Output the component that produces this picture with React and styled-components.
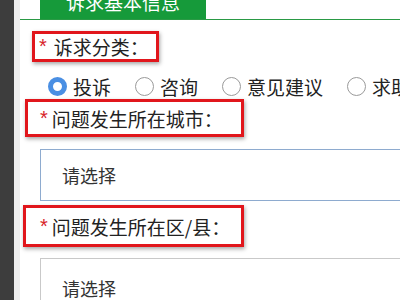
import { createGlobalStyle, styled } from "styled-components";

const GlobalStyle = createGlobalStyle`
  html, body {
    margin: 0;
    padding: 0;
    background: #ffffff;
  }
  body {
    width: 400px;
    height: 300px;
    overflow: hidden;
    font-family: "Noto Sans CJK SC", "Noto Sans", sans-serif;
  }
`;

const Page = styled.div`
  display: flex;
  width: 400px;
  height: 300px;
  overflow: hidden;
`;

const Sidebar = styled.div`
  width: 14px;
  flex-shrink: 0;
  background: #3d3d3d;
`;

const Gutter = styled.div`
  width: 6px;
  flex-shrink: 0;
  background: #eeeeee;
`;

/* the page is scrolled a little: the tab's top is out of view */
const Content = styled.div`
  flex: 1;
  min-width: 0;
  margin-top: -16px;
`;

const TabBar = styled.div`
  display: flex;
  height: 35px;
  border-bottom: 1px solid #2a9a45;
  padding-left: 20px;
`;

const Tab = styled.div`
  width: 166px;
  background: #169a3a;
  color: #ffffff;
  font-size: 19px;
  line-height: 36px;
  text-align: center;
`;

const Annotation = styled.div`
  display: flex;
  align-items: center;
  box-sizing: border-box;
  margin-left: ${(p) => p.$left}px;
  margin-top: ${(p) => p.$top}px;
  width: ${(p) => p.$width}px;
  height: ${(p) => p.$height}px;
  border: 3px solid #e1161c;
  box-shadow: 1px 2px 4px rgba(0, 0, 0, 0.35);
  padding-left: ${(p) => p.$pad}px;
  font-size: 19px;
  color: #222222;
  white-space: nowrap;
`;

const Required = styled.span`
  color: #d8232a;
  font-family: "Liberation Sans", sans-serif;
  font-size: 20px;
  margin-right: ${(p) => p.$gap}px;
`;

const RadioRow = styled.div`
  display: flex;
  align-items: center;
  gap: 24px;
  height: 24px;
  margin-top: 12px;
  margin-left: 28px;
  white-space: nowrap;
`;

const RadioItem = styled.label`
  display: flex;
  align-items: center;
  flex-shrink: 0;
  gap: 6px;
  font-size: 19px;
  color: #222222;
`;

const RadioDot = styled.span`
  box-sizing: border-box;
  width: 19px;
  height: 19px;
  border-radius: 50%;
  flex-shrink: 0;
  background: #ffffff;
  border: ${(p) => (p.$checked ? "5.5px solid #4a8fe3" : "1px solid #9a9a9a")};
`;

const SelectBox = styled.div`
  box-sizing: border-box;
  width: 380px;
  height: ${(p) => p.$height}px;
  margin-left: 20px;
  margin-top: ${(p) => p.$top}px;
  border: 1px solid ${(p) => p.$color};
  display: flex;
  align-items: center;
  padding-left: 21px;
  font-size: 18px;
  color: #333333;
`;

export default function App() {
  return (
    <>
      <GlobalStyle />
      <Page>
        <Sidebar />
        <Gutter />
        <Content>
          <TabBar>
            <Tab>诉求基本信息</Tab>
          </TabBar>

          <Annotation $left={12} $top={11} $width={127} $height={31} $pad={4}>
            <Required $gap={7}>*</Required>诉求分类：
          </Annotation>

          <RadioRow>
            <RadioItem>
              <RadioDot $checked />
              投诉
            </RadioItem>
            <RadioItem>
              <RadioDot />
              咨询
            </RadioItem>
            <RadioItem>
              <RadioDot />
              意见建议
            </RadioItem>
            <RadioItem>
              <RadioDot />
              求助
            </RadioItem>
          </RadioRow>

          <Annotation $left={5} $top={1} $width={219} $height={38} $pad={12}>
            <Required $gap={4}>*</Required>问题发生所在城市：
          </Annotation>

          <SelectBox $top={12} $height={52} $color="#8eabcf">
            请选择
          </SelectBox>

          <Annotation $left={3} $top={4} $width={221} $height={42} $pad={14}>
            <Required $gap={4}>*</Required>问题发生所在区/县：
          </Annotation>

          <SelectBox $top={11} $height={60} $color="#c9c9c9">
            请选择
          </SelectBox>
        </Content>
      </Page>
    </>
  );
}
